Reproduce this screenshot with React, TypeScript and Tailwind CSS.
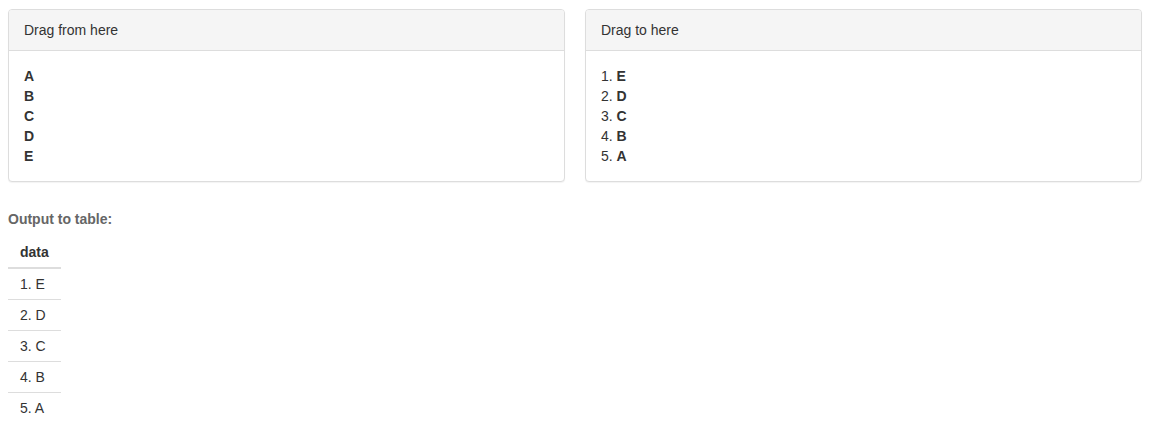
import React from "react";

const letters = ["A", "B", "C", "D", "E"];
const ordered = ["E", "D", "C", "B", "A"];

function Panel({ title, children }: { title: string; children: React.ReactNode }) {
  return (
    <div className="flex-1 rounded-[4px] border border-[#dddddd] bg-white shadow-[0_1px_1px_rgba(0,0,0,0.05)]">
      <div className="rounded-t-[3px] border-b border-[#dddddd] bg-[#f5f5f5] px-[15px] py-[10px] text-[#333333]">
        {title}
      </div>
      <div className="p-[15px]">{children}</div>
    </div>
  );
}

export default function App() {
  return (
    <div
      className="min-h-[431px] bg-white px-[8px] pt-[9px] text-[14px] leading-[20px] text-[#333333]"
      style={{ fontFamily: '"Liberation Sans", Arial, Helvetica, sans-serif' }}
    >
      <div className="flex gap-[20px]">
        <Panel title="Drag from here">
          {letters.map((l) => (
            <div key={l} className="font-bold">
              {l}
            </div>
          ))}
        </Panel>
        <Panel title="Drag to here">
          {ordered.map((l, i) => (
            <div key={l}>
              {i + 1}. <span className="font-bold">{l}</span>
            </div>
          ))}
        </Panel>
      </div>
      <div className="mt-[27px] font-bold text-[#666666]">Output to table:</div>
      <table className="mt-[8px] border-collapse">
        <thead>
          <tr>
            <th className="border-b-2 border-[#dddddd] px-[12px] py-[5px] text-left font-bold">data</th>
          </tr>
        </thead>
        <tbody>
          {ordered.map((l, i) => (
            <tr key={l}>
              <td className={`px-[12px] py-[5px] text-left ${i === 0 ? "" : "border-t border-[#dddddd]"}`}>
                {i + 1}. {l}
              </td>
            </tr>
          ))}
        </tbody>
      </table>
    </div>
  );
}
